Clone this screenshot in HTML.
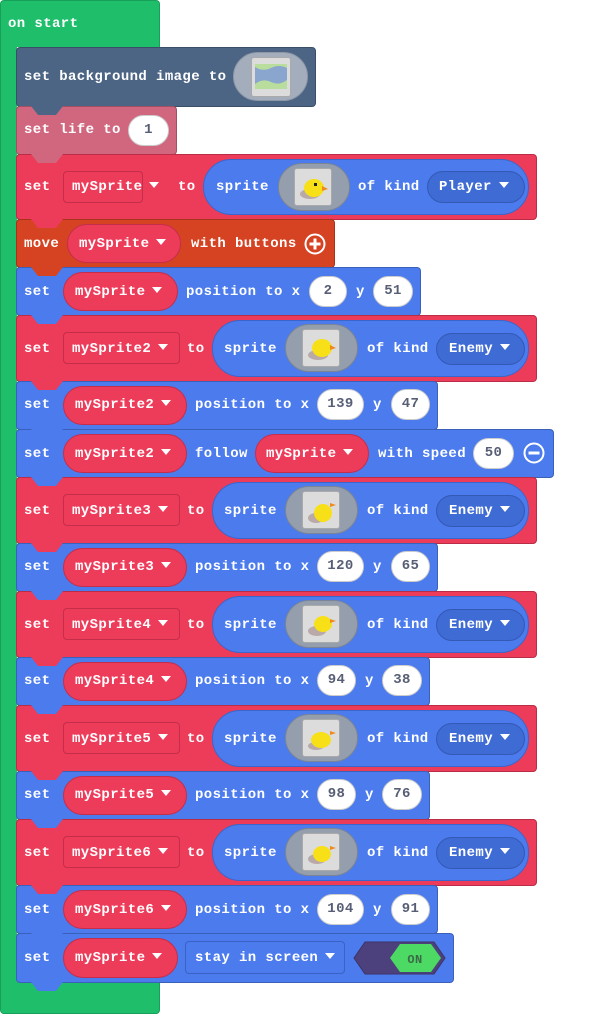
<!DOCTYPE html>
<html><head><meta charset="utf-8"><style>
*{margin:0;padding:0}
body{width:606px;height:1014px;background:#fff;position:relative;overflow:hidden;font:bold 14px "Liberation Mono",monospace;letter-spacing:.4px}
div,span{position:absolute;box-sizing:border-box}
.blk{left:16px;border:1px solid rgba(0,0,0,.22);border-radius:4px}
.tab{left:14px;bottom:-9px;width:32px;height:9px;clip-path:polygon(0 0,100% 0,78% 100%,22% 100%);z-index:5}
.t{color:#fff;line-height:18px;white-space:nowrap;z-index:3}
.t .ar{position:static;display:inline-block;width:0;height:0;border-left:5px solid transparent;border-right:5px solid transparent;border-top:6px solid #fff;margin-left:7px;vertical-align:2px}
.pill{background:#ed3b5a;border:1px solid #c42e4a;border-radius:20px;z-index:2}
.dd{background:#ed3b5a;border:1px solid #c42e4a;border-radius:4px;z-index:2}
.bp{background:#4b7bec;border:1px solid #3a66cc;border-radius:28px;z-index:1}
.gov{background:#959ead;border:1px solid #7c8593;border-radius:24px;z-index:2}
.sq{background:#dcdcdc;border:1px solid #aaa;border-radius:3px;z-index:3}
.kp{background:#3f6bd4;border:1px solid #3459b5;border-radius:16px;z-index:2}
.ov{background:#fff;border:1px solid #ccc;border-radius:16px;height:31px;color:#575e75;text-align:center;line-height:29px;z-index:2}
</style></head><body>
<div style="left:0;top:0;width:160px;height:47px;background:#1fbe6b;border:1px solid #18a05a;border-bottom:none;border-radius:4px 4px 0 0"></div>
<div style="left:0;top:40px;width:17px;height:950px;background:#1fbe6b;border-left:1px solid #18a05a"></div>
<div style="left:0;top:982px;width:160px;height:32px;background:#1fbe6b;border:1px solid #18a05a;border-top:none;border-radius:0 0 4px 4px"></div>
<span class="t" style="left:8px;top:15px">on start</span>

<div class="blk" style="top:47px;height:60px;width:300px;background:#4c6585"><div class="tab" style="background:#4c6585"></div></div>
<span class="t" style="left:24px;top:68px">set background image to</span>
<div style="left:233px;top:52px;width:75px;height:49px;background:#a3adbb;border:1px solid #8d97a6;border-radius:25px;z-index:2"></div>
<div class="sq" style="left:251px;top:57px;width:40px;height:40px"></div>
<svg style="position:absolute;left:255px;top:64px;z-index:4" width="32" height="25"><rect width="32" height="25" fill="#b9dd9c"/><path d="M0 3Q8 8 16 4T32 4V16Q24 22 16 18T0 20Z" fill="#8aa6cf"/></svg>

<div class="blk" style="top:106px;height:49px;width:161px;background:#d0677f"><div class="tab" style="background:#d0677f"></div></div>
<span class="t" style="left:24px;top:121px">set life to</span>
<div class="ov" style="left:128px;top:115px;width:41px">1</div>

<div class="blk" style="top:154px;height:66px;width:521px;background:#ed3b5a"><div class="tab" style="background:#ed3b5a"></div></div>
<span class="t" style="left:24px;top:178px">set</span>
<div class="dd" style="left:63px;top:171px;width:80px;height:32px"></div>
<span class="t" style="left:72px;top:178px">mySprite<span class="ar"></span></span>
<span class="t" style="left:178px;top:178px">to</span>
<div class="bp" style="left:203px;top:159px;width:326px;height:56px"></div>
<span class="t" style="left:216px;top:178px">sprite</span>
<div class="gov" style="left:278px;top:163px;width:72px;height:48px"></div>
<div class="sq" style="left:294px;top:168px;width:38px;height:38px"></div>
<svg style="position:absolute;left:298px;top:172px;z-index:4" width="30" height="30"><ellipse cx="12" cy="22" rx="10" ry="5" fill="#b9a9a9"/><ellipse cx="16" cy="16" rx="10" ry="9" fill="#f7e017"/><path d="M24 14l6 3-6 2z" fill="#f08a1a"/><rect x="16" y="11" width="3" height="3" fill="#222"/></svg>
<div class="kp" style="left:427px;top:171px;width:98px;height:32px"></div>
<span class="t" style="left:358px;top:178px">of kind</span>
<span class="t" style="left:439px;top:178px">Player<span class="ar"></span></span>

<div class="blk" style="top:219px;height:49px;width:319px;background:#d54322"><div class="tab" style="background:#d54322"></div></div>
<span class="t" style="left:24px;top:235px">move</span>
<div class="pill" style="left:67px;top:224px;width:114px;height:39px"></div>
<span class="t" style="left:79px;top:235px">mySprite<span class="ar"></span></span>
<span class="t" style="left:191px;top:235px">with buttons</span>
<svg style="position:absolute;left:304px;top:233px;z-index:3" width="22" height="22"><circle cx="11" cy="11" r="9.5" fill="none" stroke="#fff" stroke-width="2"/><path d="M11 5.5v11M5.5 11h11" stroke="#fff" stroke-width="3"/></svg>

<div class="blk" style="top:267px;height:49px;width:405px;background:#4b7bec"><div class="tab" style="background:#4b7bec"></div></div>
<span class="t" style="left:24px;top:283px">set</span>
<div class="pill" style="left:63px;top:272px;width:115px;height:39px"></div>
<span class="t" style="left:75px;top:283px">mySprite<span class="ar"></span></span>
<span class="t" style="left:186px;top:283px">position to x</span>
<div class="ov" style="left:309px;top:276px;width:38px">2</div>
<span class="t" style="left:356px;top:283px">y</span>
<div class="ov" style="left:373px;top:276px;width:40px">51</div>

<div class="blk" style="top:315px;height:67px;width:521px;background:#ed3b5a"><div class="tab" style="background:#ed3b5a"></div></div>
<span class="t" style="left:24px;top:340px">set</span>
<div class="dd" style="left:63px;top:332px;width:117px;height:32px"></div>
<span class="t" style="left:72px;top:340px">mySprite2<span class="ar"></span></span>
<span class="t" style="left:187px;top:340px">to</span>
<div class="bp" style="left:212px;top:320px;width:317px;height:57px"></div>
<span class="t" style="left:224px;top:340px">sprite</span>
<div class="gov" style="left:285px;top:324px;width:73px;height:48px"></div>
<div class="sq" style="left:302px;top:329px;width:38px;height:38px"></div>
<svg style="position:absolute;left:306px;top:333px;z-index:4" width="30" height="30"><ellipse cx="12" cy="22" rx="10" ry="5" fill="#b9a9a9"/><ellipse cx="16" cy="15" rx="10" ry="9" fill="#f7e017"/><path d="M24 12l6 3-6 2z" fill="#f08a1a"/></svg>
<span class="t" style="left:367px;top:340px">of kind</span>
<div class="kp" style="left:436px;top:333px;width:89px;height:32px"></div>
<span class="t" style="left:449px;top:340px">Enemy<span class="ar"></span></span>

<div class="blk" style="top:381px;height:49px;width:422px;background:#4b7bec"><div class="tab" style="background:#4b7bec"></div></div>
<span class="t" style="left:24px;top:396px">set</span>
<div class="pill" style="left:63px;top:386px;width:124px;height:39px"></div>
<span class="t" style="left:75px;top:396px">mySprite2<span class="ar"></span></span>
<span class="t" style="left:195px;top:396px">position to x</span>
<div class="ov" style="left:317px;top:389px;width:47px">139</div>
<span class="t" style="left:373px;top:396px">y</span>
<div class="ov" style="left:391px;top:389px;width:39px">47</div>

<div class="blk" style="top:429px;height:49px;width:538px;background:#4b7bec"><div class="tab" style="background:#4b7bec"></div></div>
<span class="t" style="left:24px;top:445px">set</span>
<div class="pill" style="left:63px;top:434px;width:124px;height:39px"></div>
<span class="t" style="left:75px;top:445px">mySprite2<span class="ar"></span></span>
<span class="t" style="left:195px;top:445px">follow</span>
<div class="pill" style="left:255px;top:434px;width:114px;height:39px"></div>
<span class="t" style="left:266px;top:445px">mySprite<span class="ar"></span></span>
<span class="t" style="left:378px;top:445px">with speed</span>
<div class="ov" style="left:473px;top:438px;width:41px">50</div>
<svg style="position:absolute;left:523px;top:442px;z-index:3" width="22" height="22"><circle cx="11" cy="11" r="9.5" fill="none" stroke="#fff" stroke-width="2"/><path d="M5.5 11h11" stroke="#fff" stroke-width="3"/></svg>

<div class="blk" style="top:477px;height:67px;width:521px;background:#ed3b5a"><div class="tab" style="background:#ed3b5a"></div></div>
<span class="t" style="left:24px;top:502px">set</span>
<div class="dd" style="left:63px;top:494px;width:117px;height:32px"></div>
<span class="t" style="left:72px;top:502px">mySprite3<span class="ar"></span></span>
<span class="t" style="left:187px;top:502px">to</span>
<div class="bp" style="left:212px;top:482px;width:317px;height:57px"></div>
<span class="t" style="left:224px;top:502px">sprite</span>
<div class="gov" style="left:285px;top:486px;width:73px;height:48px"></div>
<div class="sq" style="left:302px;top:491px;width:38px;height:38px"></div>
<svg style="position:absolute;left:306px;top:495px;z-index:4" width="30" height="30"><ellipse cx="10" cy="23" rx="8" ry="5" fill="#b9a9a9"/><ellipse cx="17" cy="18" rx="9" ry="9" fill="#f7e017"/><path d="M24 8l6 2-6 2z" fill="#f08a1a"/></svg>
<span class="t" style="left:367px;top:502px">of kind</span>
<div class="kp" style="left:436px;top:495px;width:89px;height:32px"></div>
<span class="t" style="left:449px;top:502px">Enemy<span class="ar"></span></span>

<div class="blk" style="top:543px;height:49px;width:422px;background:#4b7bec"><div class="tab" style="background:#4b7bec"></div></div>
<span class="t" style="left:24px;top:558px">set</span>
<div class="pill" style="left:63px;top:548px;width:124px;height:39px"></div>
<span class="t" style="left:75px;top:558px">mySprite3<span class="ar"></span></span>
<span class="t" style="left:195px;top:558px">position to x</span>
<div class="ov" style="left:317px;top:551px;width:47px">120</div>
<span class="t" style="left:373px;top:558px">y</span>
<div class="ov" style="left:391px;top:551px;width:39px">65</div>

<div class="blk" style="top:591px;height:67px;width:521px;background:#ed3b5a"><div class="tab" style="background:#ed3b5a"></div></div>
<span class="t" style="left:24px;top:616px">set</span>
<div class="dd" style="left:63px;top:608px;width:117px;height:32px"></div>
<span class="t" style="left:72px;top:616px">mySprite4<span class="ar"></span></span>
<span class="t" style="left:187px;top:616px">to</span>
<div class="bp" style="left:212px;top:596px;width:317px;height:57px"></div>
<span class="t" style="left:224px;top:616px">sprite</span>
<div class="gov" style="left:285px;top:600px;width:73px;height:48px"></div>
<div class="sq" style="left:302px;top:605px;width:38px;height:38px"></div>
<svg style="position:absolute;left:306px;top:609px;z-index:4" width="30" height="30"><ellipse cx="11" cy="22" rx="9" ry="5" fill="#b9a9a9"/><ellipse cx="17" cy="15" rx="9" ry="8" fill="#f7e017"/><path d="M24 10l6 2-6 2z" fill="#f08a1a"/></svg>
<span class="t" style="left:367px;top:616px">of kind</span>
<div class="kp" style="left:436px;top:609px;width:89px;height:32px"></div>
<span class="t" style="left:449px;top:616px">Enemy<span class="ar"></span></span>

<div class="blk" style="top:657px;height:49px;width:414px;background:#4b7bec"><div class="tab" style="background:#4b7bec"></div></div>
<span class="t" style="left:24px;top:672px">set</span>
<div class="pill" style="left:63px;top:662px;width:124px;height:39px"></div>
<span class="t" style="left:75px;top:672px">mySprite4<span class="ar"></span></span>
<span class="t" style="left:195px;top:672px">position to x</span>
<div class="ov" style="left:317px;top:665px;width:39px">94</div>
<span class="t" style="left:365px;top:672px">y</span>
<div class="ov" style="left:382px;top:665px;width:40px">38</div>

<div class="blk" style="top:705px;height:67px;width:521px;background:#ed3b5a"><div class="tab" style="background:#ed3b5a"></div></div>
<span class="t" style="left:24px;top:730px">set</span>
<div class="dd" style="left:63px;top:722px;width:117px;height:32px"></div>
<span class="t" style="left:72px;top:730px">mySprite5<span class="ar"></span></span>
<span class="t" style="left:187px;top:730px">to</span>
<div class="bp" style="left:212px;top:710px;width:317px;height:57px"></div>
<span class="t" style="left:224px;top:730px">sprite</span>
<div class="gov" style="left:285px;top:714px;width:73px;height:48px"></div>
<div class="sq" style="left:302px;top:719px;width:38px;height:38px"></div>
<svg style="position:absolute;left:306px;top:723px;z-index:4" width="30" height="30"><ellipse cx="10" cy="23" rx="8" ry="4" fill="#b9a9a9"/><ellipse cx="15" cy="17" rx="10" ry="8" fill="#f7e017"/><path d="M24 8l6 2-6 2z" fill="#f08a1a"/></svg>
<span class="t" style="left:367px;top:730px">of kind</span>
<div class="kp" style="left:436px;top:723px;width:89px;height:32px"></div>
<span class="t" style="left:449px;top:730px">Enemy<span class="ar"></span></span>

<div class="blk" style="top:771px;height:49px;width:414px;background:#4b7bec"><div class="tab" style="background:#4b7bec"></div></div>
<span class="t" style="left:24px;top:786px">set</span>
<div class="pill" style="left:63px;top:776px;width:124px;height:39px"></div>
<span class="t" style="left:75px;top:786px">mySprite5<span class="ar"></span></span>
<span class="t" style="left:195px;top:786px">position to x</span>
<div class="ov" style="left:317px;top:779px;width:39px">98</div>
<span class="t" style="left:365px;top:786px">y</span>
<div class="ov" style="left:382px;top:779px;width:40px">76</div>

<div class="blk" style="top:819px;height:67px;width:521px;background:#ed3b5a"><div class="tab" style="background:#ed3b5a"></div></div>
<span class="t" style="left:24px;top:844px">set</span>
<div class="dd" style="left:63px;top:836px;width:117px;height:32px"></div>
<span class="t" style="left:72px;top:844px">mySprite6<span class="ar"></span></span>
<span class="t" style="left:187px;top:844px">to</span>
<div class="bp" style="left:212px;top:824px;width:317px;height:57px"></div>
<span class="t" style="left:224px;top:844px">sprite</span>
<div class="gov" style="left:285px;top:828px;width:73px;height:48px"></div>
<div class="sq" style="left:302px;top:833px;width:38px;height:38px"></div>
<svg style="position:absolute;left:306px;top:837px;z-index:4" width="30" height="30"><ellipse cx="11" cy="22" rx="9" ry="5" fill="#b9a9a9"/><ellipse cx="16" cy="17" rx="9" ry="8" fill="#f7e017"/><path d="M24 9l6 2-6 2z" fill="#f08a1a"/></svg>
<span class="t" style="left:367px;top:844px">of kind</span>
<div class="kp" style="left:436px;top:837px;width:89px;height:32px"></div>
<span class="t" style="left:449px;top:844px">Enemy<span class="ar"></span></span>

<div class="blk" style="top:885px;height:49px;width:422px;background:#4b7bec"><div class="tab" style="background:#4b7bec"></div></div>
<span class="t" style="left:24px;top:901px">set</span>
<div class="pill" style="left:63px;top:890px;width:124px;height:39px"></div>
<span class="t" style="left:75px;top:901px">mySprite6<span class="ar"></span></span>
<span class="t" style="left:195px;top:901px">position to x</span>
<div class="ov" style="left:317px;top:894px;width:47px">104</div>
<span class="t" style="left:373px;top:901px">y</span>
<div class="ov" style="left:391px;top:894px;width:39px">91</div>

<div class="blk" style="top:933px;height:50px;width:438px;background:#4b7bec"><div class="tab" style="background:#4b7bec"></div></div>
<span class="t" style="left:24px;top:949px">set</span>
<div class="pill" style="left:63px;top:938px;width:115px;height:40px"></div>
<span class="t" style="left:75px;top:949px">mySprite<span class="ar"></span></span>
<div class="dd" style="left:185px;top:941px;width:160px;height:33px;background:#4b7bec;border-color:#3a62c4"></div>
<span class="t" style="left:195px;top:949px">stay in screen<span class="ar"></span></span>
<svg style="position:absolute;left:353px;top:941px;z-index:3" width="93" height="34"><polygon points="12,1 81,1 92,17 81,33 12,33 1,17" fill="#4d417d" stroke="#3d3366"/><polygon points="47,3 78,3 88,17 78,31 47,31 37,17" fill="#4cd964"/><text x="62" y="22" font-family="Liberation Mono" font-size="12" fill="#3a6a47" text-anchor="middle">ON</text></svg>
</body></html>
